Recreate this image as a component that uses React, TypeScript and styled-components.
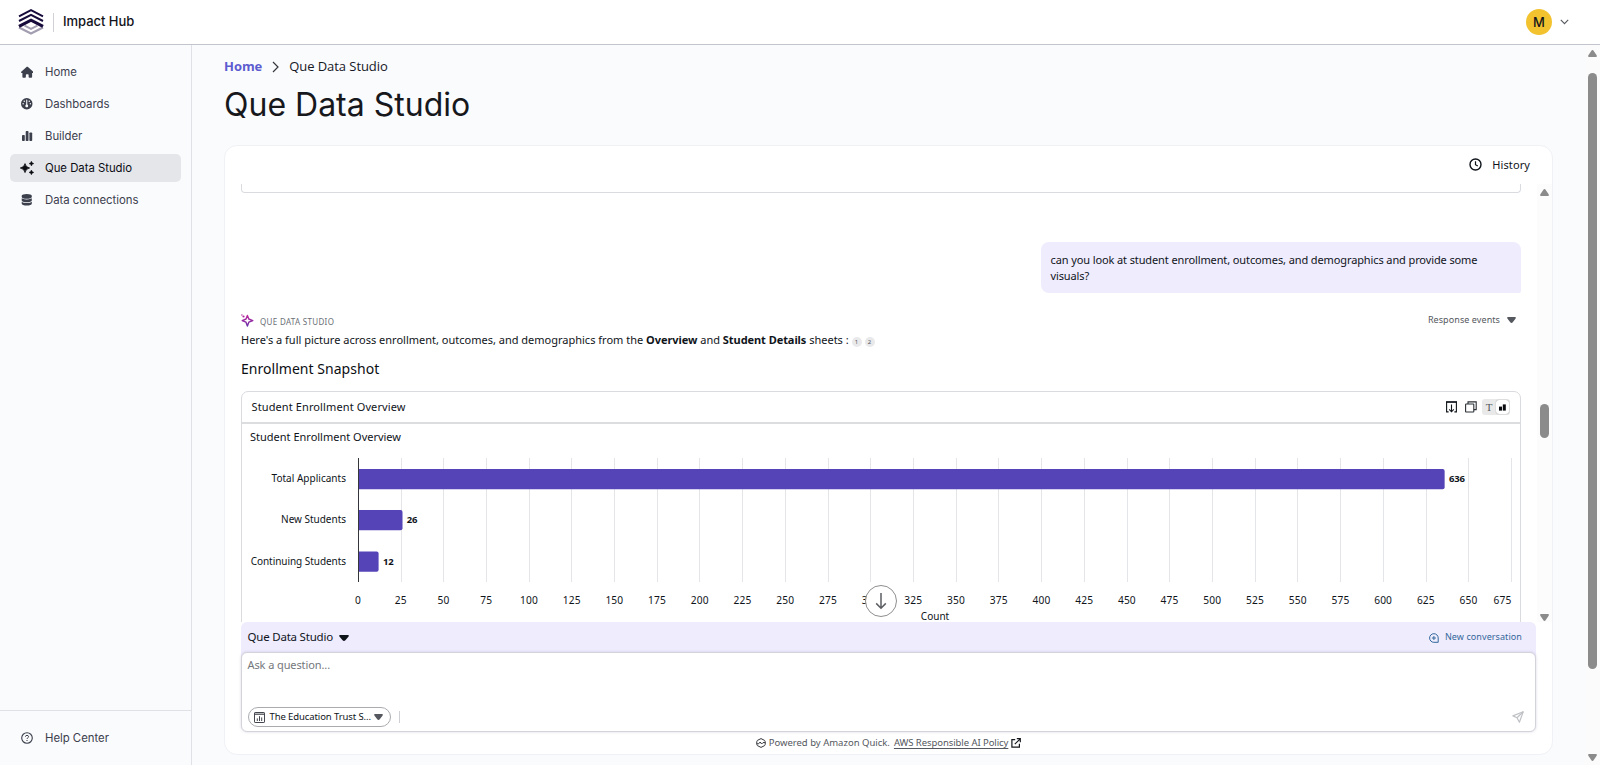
import React from 'react';
import styled, { createGlobalStyle, css } from 'styled-components';
import { FaHouse, FaGauge, FaDatabase } from 'react-icons/fa6';

const GlobalStyle = createGlobalStyle`
  * { box-sizing: border-box; }
  body { margin: 0; overflow: hidden; background: #fafbfd; }
`;

const inter = '"Inter", "Liberation Sans", sans-serif';
const ember = '"Noto Sans", "Open Sans", sans-serif';

/* ---------- shell ---------- */

const Page = styled.div`
  display: flex;
  flex-direction: column;
  width: 100%;
  height: 765px;
  background: #fafbfd;
  font-family: ${ember};
  color: #0f141a;
`;

const Header = styled.header`
  display: flex;
  align-items: center;
  flex: none;
  height: 45px;
  padding: 0 31px 0 18px;
  background: #fff;
  border-bottom: 1px solid #c3c5cc;
`;

const HeaderDivider = styled.span`
  width: 1px;
  height: 19px;
  margin: 0 9px 0 9px;
  background: #d0d2d8;
`;

const Product = styled.span`
  padding-bottom: 2px;
  font: 500 13px/18px ${inter};
  letter-spacing: -0.03px;
  color: #121319;
`;

const Account = styled.div`
  display: flex;
  align-items: center;
  gap: 8px;
  margin-left: auto;
`;

const Avatar = styled.span`
  display: flex;
  align-items: center;
  justify-content: center;
  width: 26px;
  height: 26px;
  border-radius: 50%;
  background: #f2c32f;
  font: 500 13px/26px ${inter};
  color: #14151b;
`;

const Body = styled.div`
  display: flex;
  flex: 1;
  min-height: 0;
`;

const Sidebar = styled.aside`
  display: flex;
  flex-direction: column;
  justify-content: space-between;
  flex: none;
  width: 192px;
  border-right: 1px solid #dfe1e6;
`;

const Nav = styled.nav`
  display: flex;
  flex-direction: column;
  gap: 4px;
  padding: 13px 10px;
`;

const NavItem = styled.a<{ $active?: boolean }>`
  display: flex;
  align-items: center;
  gap: 11px;
  height: 28px;
  padding-left: 10px;
  border-radius: 5px;
  font: 400 11.375px/16px ${inter};
  letter-spacing: -0.02px;
  color: #3c404d;
  ${p => p.$active && css`
    background: #e5e6ea;
    color: #0b0c12;
  `}
`;

const NavIcon = styled.span`
  display: flex;
  align-items: center;
  justify-content: center;
  width: 14px;
  height: 14px;
`;

const SidebarFooter = styled.div`
  height: 55px;
  padding: 13px 10px 0;
  border-top: 1px solid #dfe1e6;
`;

const Main = styled.main`
  flex: 1;
  min-width: 0;
  padding: 12px 0 0 32px;
`;

const Breadcrumb = styled.div`
  display: flex;
  align-items: center;
  height: 18px;
  font: 400 13px/18px "Open Sans", sans-serif;
  letter-spacing: -0.06px;
  color: #16181f;
`;

const Crumb = styled.a`
  font-weight: 700;
  color: #5d5bd0;
`;

const CrumbChevron = styled.svg`
  margin: 2px 10px 0 10px;
`;

const Title = styled.h1`
  margin: 10px 0 20px;
  font: 400 32px/40px ${inter};
  color: #17181c;
`;

const Card = styled.section`
  display: flex;
  flex-direction: column;
  width: 1329px;
  height: 610px;
  border: 1px solid #f0f1f5;
  border-radius: 13px;
  background: #fff;
`;

/* ---------- scroll bars ---------- */

const ScrollBar = styled.div<{ $track?: string; $top: number; $bottom: number }>`
  display: flex;
  flex-direction: column;
  align-items: center;
  flex: none;
  width: 15px;
  padding: ${p => p.$top}px 0 ${p => p.$bottom}px;
  background: ${p => p.$track || 'transparent'};
`;

const Thumb = styled.span<{ $before: number; $size: number }>`
  width: 9px;
  height: ${p => p.$size}px;
  margin: ${p => p.$before}px 0 auto;
  border-radius: 5px;
  background: #8b8b8b;
`;

/* ---------- conversation ---------- */

const HistoryBar = styled.div`
  display: flex;
  align-items: center;
  justify-content: flex-end;
  gap: 10px;
  flex: none;
  height: 38px;
  padding: 0 22px 1px 0;
  font-size: 11px;
  line-height: 16px;
  letter-spacing: 0.1px;
`;

const Scroller = styled.div`
  position: relative;
  display: flex;
  flex: none;
  height: 438px;
  padding-left: 16px;
  overflow: hidden;
`;

const Thread = styled.div`
  width: 1280px;
  margin-right: auto;
`;

const PreviousWidget = styled.div`
  height: 9px;
  border: 1px solid #d9dbdf;
  border-top: 0;
  border-radius: 0 0 4px 4px;
`;

const Question = styled.p`
  width: 480px;
  height: 51px;
  margin: 49px 0 20px auto;
  padding: 10px 30px 0 9.5px;
  border-radius: 8px 8px 2px 8px;
  background: #efecfe;
  font-size: 11px;
  line-height: 16px;
  letter-spacing: -0.11px;
`;

const AnswerHead = styled.div`
  display: flex;
  align-items: center;
  height: 15px;
`;

const AgentName = styled.span`
  margin: 3px auto 0 6px;
  font-size: 8px;
  line-height: 12px;
  letter-spacing: 0.32px;
  color: #6b6f76;
`;

const EventsToggle = styled.span`
  display: flex;
  align-items: center;
  gap: 7px;
  padding: 0 5px 1px 0;
  font-size: 9px;
  line-height: 14px;
  letter-spacing: 0.08px;
  color: #55585e;
`;

const Answer = styled.p`
  display: flex;
  align-items: center;
  margin: 4px 0 11px;
  font-size: 11px;
  line-height: 16px;
  letter-spacing: 0;
  white-space: pre;
  b { letter-spacing: -0.06px; }
`;

const Cite = styled.sup`
  display: flex;
  align-items: center;
  justify-content: center;
  width: 10px;
  height: 10px;
  margin: 3px 3px 0 0;
  border-radius: 5px;
  background: #e9e9eb;
  font-size: 6px;
  line-height: 10px;
  color: #55585e;
`;

const Section = styled.h2`
  margin: 0 0 12px;
  font-size: 14px;
  line-height: 20px;
  font-weight: 400;
  letter-spacing: 0.03px;
  color: #0b0e12;
`;

const Widget = styled.div`
  height: 260px;
  border: 1px solid #d9dbdf;
  border-radius: 7px 7px 0 0;
`;

const WidgetHead = styled.div`
  display: flex;
  align-items: center;
  gap: 8px;
  height: 32px;
  padding: 0 10px 0 9.5px;
  border-bottom: 2px solid #dcdddf;
`;

const WidgetTitle = styled.span`
  margin-right: auto;
  font-size: 11px;
  line-height: 16px;
  letter-spacing: 0.11px;
`;

const ViewToggle = styled.span`
  display: flex;
  align-items: center;
  width: 28px;
  height: 16px;
  margin-left: -3px;
  border-radius: 3px;
  background: #e9e9ea;
`;

const ViewOption = styled.span<{ $on?: boolean }>`
  display: flex;
  align-items: center;
  justify-content: center;
  width: 14px;
  height: 14px;
  font: 400 11px/14px "Liberation Serif", serif;
  color: #55585e;
  ${p => p.$on && css`
    width: 13px;
    border-radius: 3px;
    background: #fff;
    box-shadow: 0 0 1px rgba(0, 0, 0, 0.5);
  `}
`;

const ChartText = styled.text<{ $bold?: boolean }>`
  font-family: ${ember};
  font-size: 10px;
  font-weight: ${p => (p.$bold ? 700 : 400)};
  fill: #0f141a;
`;

const JumpButton = styled.button`
  position: absolute;
  left: 640px;
  bottom: 5px;
  display: flex;
  align-items: center;
  justify-content: center;
  width: 32px;
  height: 32px;
  padding: 0;
  border: 1px solid #8f8f8f;
  border-radius: 50%;
  background: #fff;
`;

/* ---------- composer ---------- */

const Composer = styled.div`
  width: 1295px;
  margin-left: 16px;
`;

const ComposerBar = styled.div`
  display: flex;
  align-items: center;
  height: 38px;
  padding: 0 14px 8px 6.5px;
  border-radius: 6px 6px 0 0;
  background: #efecfe;
`;

const AgentPicker = styled.span`
  display: flex;
  align-items: center;
  gap: 6px;
  margin-right: auto;
  font-size: 11.5px;
  line-height: 16px;
  letter-spacing: -0.21px;
  svg { margin-top: 1px; }
`;

const NewConversation = styled.a`
  display: flex;
  align-items: center;
  gap: 6px;
  font-size: 9px;
  line-height: 14px;
  letter-spacing: 0.08px;
  color: #33689a;
  svg { margin-top: 2px; }
`;

const Prompt = styled.div`
  display: flex;
  flex-direction: column;
  justify-content: space-between;
  position: relative;
  height: 80px;
  margin-top: -8px;
  padding: 4px 11px 4px 6px;
  border: 1px solid #d3d3da;
  border-radius: 6px;
  background: #fff;
  box-shadow: 0 0 3px rgba(60, 50, 110, 0.18);
`;

const Placeholder = styled.span`
  margin-left: -0.5px;
  font-size: 11px;
  line-height: 16px;
  letter-spacing: -0.1px;
  color: #74777c;
`;

const PromptTools = styled.div`
  display: flex;
  align-items: center;
`;

const SourcePill = styled.span`
  display: flex;
  align-items: center;
  width: 143px;
  height: 20px;
  padding: 0 7px 0 5px;
  border: 1px solid #a9abaf;
  border-radius: 10px;
  font-size: 9.5px;
  line-height: 14px;
  letter-spacing: -0.1px;
  white-space: nowrap;
  svg:last-child { margin: -1px 0 0 auto; }
  span { margin-left: 4.5px; }
`;

const ToolDivider = styled.span`
  width: 1px;
  height: 12px;
  margin: 0 auto 0 8px;
  background: #cfd0d3;
`;

const Legal = styled.div`
  display: flex;
  align-items: center;
  justify-content: center;
  margin-top: 3px;
  font-size: 9.5px;
  line-height: 16px;
  color: #55585e;
  span { margin: 0 4px 0 3px; }
`;

const PolicyLink = styled.a`
  margin-right: 3px;
  letter-spacing: -0.07px;
  text-decoration: underline;
  text-underline-offset: 1.5px;
`;

/* ---------- drawings ---------- */

const Logo = () => (
  <svg width="26" height="28" viewBox="0 0 26 28" fill="none">
    <path d="M1 19.4 L13 25.6 L25 19.4" stroke="#a39eb1" strokeWidth="2.2" />
    <path d="M6.6 17.6 L13 20.8 L19.4 17.6" stroke="#a39eb1" strokeWidth="2" />
    <path d="M1 8.4 L13 2.2 L25 8.4" stroke="#170b3b" strokeWidth="2" />
    <path d="M1 13 L13 6.8 L25 13" stroke="#170b3b" strokeWidth="2" />
    <path d="M1 18.4 L13 12.2 L25 18.4" stroke="#170b3b" strokeWidth="3.2" />
  </svg>
);

const BarsIcon = () => (
  <svg width="12" height="12" viewBox="0 0 12 12" fill="currentColor">
    <rect x="1" y="5" width="2.8" height="6" rx=".8" />
    <rect x="4.7" y="1" width="2.8" height="10" rx=".8" />
    <rect x="8.4" y="2.4" width="2.8" height="8.6" rx=".8" />
  </svg>
);

const SparklesIcon = () => (
  <svg width="14" height="14" viewBox="0 0 14 14" fill="currentColor">
    <path d="M5 2.6 Q5.7 6.3 9.6 7 Q5.7 7.7 5 11.6 Q4.3 7.7 0.3 7 Q4.3 6.3 5 2.6Z" stroke="currentColor" strokeWidth=".8" strokeLinejoin="round" />
    <path d="M11.4 .2 Q11.7 2.2 13.8 2.6 Q11.7 3 11.4 5 Q11.1 3 9 2.6 Q11.1 2.2 11.4 .2Z" stroke="currentColor" strokeWidth=".5" />
    <path d="M11.4 9 Q11.7 11 13.8 11.4 Q11.7 11.8 11.4 13.8 Q11.1 11.8 9 11.4 Q11.1 11 11.4 9Z" stroke="currentColor" strokeWidth=".5" />
  </svg>
);

const HelpIcon = () => (
  <svg width="12" height="12" viewBox="0 0 12 12" fill="none" stroke="#3c404d">
    <circle cx="6" cy="6" r="5.3" strokeWidth="1.1" />
    <path d="M4.4 4.7 C4.4 2.9 7.6 2.9 7.6 4.7 C7.6 5.8 6 5.8 6 7" strokeWidth="1" />
    <path d="M6 8.1 V9" strokeWidth="1.1" />
  </svg>
);

const ClockIcon = () => (
  <svg width="13" height="13" viewBox="0 0 13 13" fill="none" stroke="#0f141a" strokeWidth="1.4">
    <circle cx="6.5" cy="6.5" r="5.5" />
    <path d="M6.5 3.2 V6.7 L8.8 8" strokeWidth="1.2" />
  </svg>
);

const AgentIcon = () => (
  <svg width="13" height="14" viewBox="0 0 13 14" fill="none">
    <defs>
      <linearGradient id="agent" x1="0" y1="0" x2="0" y2="1">
        <stop offset="0" stopColor="#c0269c" />
        <stop offset="1" stopColor="#6a2fa8" />
      </linearGradient>
    </defs>
    <path d="M6.4 1.4 L7.8 5 L11.8 6.6 L7.8 8.2 L6.4 12 L5 8.2 L1.2 6.6 L5 5Z" stroke="url(#agent)" strokeWidth="1.4" strokeLinejoin="round" />
    <circle cx="2.5" cy="2.5" r="1.1" fill="#b02a9e" />
    <circle cx="0.9" cy="1" r=".7" fill="#b02a9e" />
  </svg>
);

const Caret = ({ w = 10, h = 6, fill = '#0f141a', up = false }: { w?: number; h?: number; fill?: string; up?: boolean }) => (
  <svg width={w} height={h} viewBox="0 0 10 6" preserveAspectRatio="none" fill={fill}>
    {up
      ? <path d="M5 0 Q5.8 0 6.4 .8 L9.6 4.6 Q10.3 6 9 6 H1 Q-.3 6 .4 4.6 L3.6 .8 Q4.2 0 5 0Z" />
      : <path d="M5 6 Q5.8 6 6.4 5.2 L9.6 1.4 Q10.3 0 9 0 H1 Q-.3 0 .4 1.4 L3.6 5.2 Q4.2 6 5 6Z" />}
  </svg>
);

const ChevronDown = () => (
  <svg width="9" height="6" viewBox="0 0 9 6" fill="none" stroke="#55585e" strokeWidth="1.1">
    <path d="M.8 .8 L4.5 4.6 L8.2 .8" />
  </svg>
);

const DownloadIcon = () => (
  <svg width="11" height="12" viewBox="0 0 11 12" fill="none" stroke="#0f141a" strokeWidth="1.1">
    <path d="M2.6 10.9 H.6 V1 H10.4 V10.9 H8.4" />
    <path d="M0 1 H11" strokeWidth="1.4" />
    <path d="M5.5 3.6 V10.8 M3.2 8.4 L5.5 10.8 L7.8 8.4" />
  </svg>
);

const CopyIcon = () => (
  <svg width="12" height="12" viewBox="0 0 12 12" fill="none" stroke="#2b3036" strokeWidth="1.1">
    <rect x=".6" y="3" width="8.2" height="8" rx=".6" />
    <path d="M3 3 V.9 H11.2 V8.6 H8.8" />
  </svg>
);

const ChatPlusIcon = () => (
  <svg width="10" height="10" viewBox="0 0 10 10" fill="none" stroke="#33689a" strokeWidth="1">
    <path d="M9.2 9.3 H4.9 A4.3 4.3 0 1 1 9.2 5Z" />
    <path d="M4.9 3 V7 M2.9 5 H6.9" />
  </svg>
);

const SourceIcon = () => (
  <svg width="11" height="11" viewBox="0 0 11 11" fill="none" stroke="#44474d" strokeWidth="1">
    <rect x=".5" y=".5" width="10" height="10" rx=".6" />
    <path d="M.5 2.2 H10.5" strokeWidth="1.2" />
    <path d="M3.3 9 V6.4 M5.5 9 V4.2 M7.7 9 V5.4" />
  </svg>
);

const SendIcon = () => (
  <svg width="12" height="12" viewBox="0 0 12 12" fill="none" stroke="#bfc1c5" strokeWidth="1.2" strokeLinejoin="round">
    <path d="M11.2 .8 L.9 4.9 L5 6.8 L7.4 11.2Z" />
    <path d="M11.2 .8 L5 6.8" />
  </svg>
);

const QuickIcon = () => (
  <svg width="10" height="10" viewBox="0 0 10 10" fill="none" stroke="#33363b" strokeWidth="1">
    <path d="M5 .6 L8.6 2.4 Q9.3 3 9.3 5 Q9.3 7 8.6 7.6 L5 9.4 L1.4 7.6 Q.7 7 .7 5 Q.7 3 1.4 2.4Z" strokeLinejoin="round" />
    <path d="M.9 5.8 H2.6 L4.2 4 L5.6 6 L7 4.6 H9.1" />
  </svg>
);

const ExternalIcon = () => (
  <svg width="10" height="10" viewBox="0 0 10 10" fill="none" stroke="#16181d" strokeWidth="1.2">
    <path d="M4.2 1.6 H.9 V9.2 H8.4 V5.8" />
    <path d="M5.8 .7 H9.3 V4.2 M9.2 .8 L3.8 6.2" />
  </svg>
);

/* ---------- chart ---------- */

const AXIS_X = 116.1;
const STEP = 42.71;
const TICKS = Array.from({ length: 28 }, (_, i) => i * 25);
const ROWS = [
  { label: 'Total Applicants', value: 636, y: 45, spacing: 0.02 },
  { label: 'New Students', value: 26, y: 86, spacing: -0.02 },
  { label: 'Continuing Students', value: 12, y: 127.6, spacing: -0.05 },
];

const EnrollmentChart = () => (
  <svg width="1278" height="198" viewBox="0 0 1278 198" display="block">
    <ChartText x="8" y="17" style={{ fontSize: 11 }} textLength="151">Student Enrollment Overview</ChartText>
    {TICKS.slice(1).map(t => (
      <path key={t} d={`M${Math.round(AXIS_X + (t / 25) * STEP - 0.3) + 0.5} 34 V158`} stroke="#e4e5e8" />
    ))}
    {ROWS.map(r => {
      const end = AXIS_X + (r.value / 25) * STEP;
      return (
        <g key={r.label}>
          <path d={`M116.5 ${r.y} H${end - 2} q2 0 2 2 v16.2 q0 2 -2 2 H116.5Z`} fill="#5544b8" />
          <ChartText x="104" y={r.y + 13.2} textAnchor="end" style={{ letterSpacing: r.spacing }}>{r.label}</ChartText>
          <ChartText x={end + 4.3} y={r.y + 13.2} $bold style={{ fontSize: 9.5, letterSpacing: -0.15 }}>{r.value}</ChartText>
        </g>
      );
    })}
    <path d="M116.5 34 V158" stroke="#33363b" />
    {TICKS.map(t => (
      <ChartText
        key={t}
        x={t === 675 ? 1269.5 : AXIS_X + (t / 25) * STEP}
        y="180.3"
        textAnchor={t === 675 ? 'end' : 'middle'}
        style={{ fontSize: 10.2, letterSpacing: 0.15 }}
      >
        {t}
      </ChartText>
    ))}
    <ChartText x="693" y="196" textAnchor="middle">Count</ChartText>
  </svg>
);

const NAV = [
  { label: 'Home', icon: <FaHouse size={12.5} /> },
  { label: 'Dashboards', icon: <FaGauge size={11.5} /> },
  { label: 'Builder', icon: <BarsIcon /> },
  { label: 'Que Data Studio', icon: <SparklesIcon />, active: true },
  { label: 'Data connections', icon: <FaDatabase size={11.5} /> },
];

export default function App() {
  return (
    <Page>
      <GlobalStyle />
      <Header>
        <Logo />
        <HeaderDivider />
        <Product>Impact Hub</Product>
        <Account>
          <Avatar>M</Avatar>
          <ChevronDown />
        </Account>
      </Header>
      <Body>
        <Sidebar>
          <Nav>
            {NAV.map(n => (
              <NavItem key={n.label} $active={n.active}>
                <NavIcon>{n.icon}</NavIcon>
                {n.label}
              </NavItem>
            ))}
          </Nav>
          <SidebarFooter>
            <NavItem>
              <NavIcon><HelpIcon /></NavIcon>
              Help Center
            </NavItem>
          </SidebarFooter>
        </Sidebar>
        <Main>
          <Breadcrumb>
            <Crumb>Home</Crumb>
            <CrumbChevron width="7" height="12" viewBox="0 0 7 12" fill="none" stroke="#33363b" strokeWidth="1.2">
              <path d="M1 1 L6 6 L1 11" />
            </CrumbChevron>
            Que Data Studio
          </Breadcrumb>
          <Title>Que Data Studio</Title>
          <Card>
            <HistoryBar>
              <ClockIcon />
              History
            </HistoryBar>
            <Scroller>
              <Thread>
                <PreviousWidget />
                <Question>
                  can you look at student enrollment, outcomes, and demographics and provide some visuals?
                </Question>
                <AnswerHead>
                  <AgentIcon />
                  <AgentName>QUE DATA STUDIO</AgentName>
                  <EventsToggle>
                    Response events
                    <Caret w={9} fill="#55585e" />
                  </EventsToggle>
                </AnswerHead>
                <Answer>
                  <span>
                    {"Here's a full picture across enrollment, outcomes, and demographics from the "}
                    <b>Overview</b>{' and '}<b>Student Details</b>{' sheets : '}
                  </span>
                  <Cite>1</Cite>
                  <Cite>2</Cite>
                </Answer>
                <Section>Enrollment Snapshot</Section>
                <Widget>
                  <WidgetHead>
                    <WidgetTitle>Student Enrollment Overview</WidgetTitle>
                    <DownloadIcon />
                    <CopyIcon />
                    <ViewToggle>
                      <ViewOption>T</ViewOption>
                      <ViewOption $on>
                        <svg width="7" height="7" viewBox="0 0 7 7" fill="#0b0c10">
                          <rect y="2.6" width="3" height="4" />
                          <rect x="3.8" y=".4" width="3" height="6.2" />
                        </svg>
                      </ViewOption>
                    </ViewToggle>
                  </WidgetHead>
                  <EnrollmentChart />
                </Widget>
              </Thread>
              <ScrollBar $top={5} $bottom={1} $track="#fcfcfc">
                <Caret w={9} h={7} fill="#8b8b8b" up />
                <Thumb $before={208} $size={34} />
                <Caret w={9} h={7} fill="#8b8b8b" />
              </ScrollBar>
              <JumpButton aria-label="Jump to latest">
                <svg width="12" height="18" viewBox="0 0 12 18" fill="none" stroke="#5c5e62" strokeWidth="1.5">
                  <path d="M6 1 V16 M1.2 11.4 L6 16.2 L10.8 11.4" />
                </svg>
              </JumpButton>
            </Scroller>
            <Composer>
              <ComposerBar>
                <AgentPicker>
                  Que Data Studio
                  <Caret w={10} h={6} />
                </AgentPicker>
                <NewConversation>
                  <ChatPlusIcon />
                  New conversation
                </NewConversation>
              </ComposerBar>
              <Prompt>
                <Placeholder>Ask a question...</Placeholder>
                <PromptTools>
                  <SourcePill>
                    <SourceIcon />
                    <span>The Education Trust S...</span>
                    <Caret w={9} h={6} fill="#55585e" />
                  </SourcePill>
                  <ToolDivider />
                  <SendIcon />
                </PromptTools>
              </Prompt>
              <Legal>
                <QuickIcon />
                <span>Powered by Amazon Quick.</span>
                <PolicyLink>AWS Responsible AI Policy</PolicyLink>
                <ExternalIcon />
              </Legal>
            </Composer>
          </Card>
        </Main>
        <ScrollBar $top={5} $bottom={4} $track="#fbfbfc">
          <Caret w={9} h={7} fill="#8b8b8b" up />
          <Thumb $before={16} $size={596} />
          <Caret w={9} h={7} fill="#8b8b8b" />
        </ScrollBar>
      </Body>
    </Page>
  );
}
